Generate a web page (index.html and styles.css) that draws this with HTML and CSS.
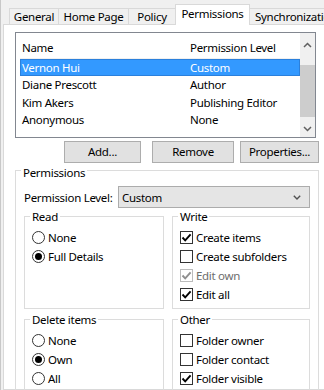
FILE: index.html
```html
<!DOCTYPE html>
<html>
<head>
<meta charset="utf-8">
<link rel="stylesheet" href="styles.css">
</head>
<body>
<div class="window">
  <div class="tabs">
    <div class="tab tab-general">General</div>
    <div class="tab tab-home">Home Page</div>
    <div class="tab tab-policy">Policy</div>
    <div class="tab tab-active">Permissions</div>
    <div class="tab tab-sync">Synchronization</div>
  </div>
  <div class="panel">
    <div class="listbox">
      <div class="list-main">
        <div class="list-head"><span class="col-name">Name</span><span>Permission Level</span></div>
        <div class="row row-selected"><span class="col-name">Vernon Hui</span><span>Custom</span></div>
        <div class="row"><span class="col-name">Diane Prescott</span><span>Author</span></div>
        <div class="row"><span class="col-name">Kim Akers</span><span>Publishing Editor</span></div>
        <div class="row"><span class="col-name">Anonymous</span><span>None</span></div>
      </div>
      <div class="scrollbar">
        <div class="sb-up"><svg width="9" height="6" viewBox="0 0 9 6"><path d="M1 5 L4.5 1.5 L8 5" fill="none" stroke="#606060" stroke-width="1.5"/></svg></div>
        <div class="sb-thumb"></div>
        <div class="sb-down"><svg width="9" height="6" viewBox="0 0 9 6"><path d="M1 1 L4.5 4.5 L8 1" fill="none" stroke="#606060" stroke-width="1.5"/></svg></div>
      </div>
    </div>
    <div class="buttons">
      <button class="btn btn-add">Add...</button>
      <button class="btn btn-remove">Remove</button>
      <button class="btn btn-props">Properties...</button>
    </div>
    <div class="group group-perm">
      <div class="legend">Permissions</div>
      <div class="level-row">
        <span class="level-label">Permission Level:</span>
        <div class="select"><span>Custom</span><svg width="8" height="5" viewBox="0 0 8 5"><path d="M0.8 0.8 L4 4 L7.2 0.8" fill="none" stroke="#505050" stroke-width="1.4"/></svg></div>
      </div>
      <div class="grid">
        <div class="group sub">
          <div class="legend">Read</div>
          <div class="opts">
            <div class="opt"><span class="radio"></span>None</div>
            <div class="opt"><span class="radio on"></span>Full Details</div>
          </div>
        </div>
        <div class="group sub">
          <div class="legend">Write</div>
          <div class="opts">
            <div class="opt"><span class="check"><svg width="11" height="11" viewBox="0 0 11 11"><path d="M1.5 5.5 L4.2 8.3 L9.6 2.4" fill="none" stroke="#000" stroke-width="1.9"/></svg></span>Create items</div>
            <div class="opt"><span class="check"></span>Create subfolders</div>
            <div class="opt opt-disabled"><span class="check"><svg width="11" height="11" viewBox="0 0 11 11"><path d="M1.5 5.5 L4.2 8.3 L9.6 2.4" fill="none" stroke="#8f8f8f" stroke-width="1.9"/></svg></span>Edit own</div>
            <div class="opt"><span class="check"><svg width="11" height="11" viewBox="0 0 11 11"><path d="M1.5 5.5 L4.2 8.3 L9.6 2.4" fill="none" stroke="#000" stroke-width="1.9"/></svg></span>Edit all</div>
          </div>
        </div>
        <div class="group sub">
          <div class="legend">Delete items</div>
          <div class="opts">
            <div class="opt"><span class="radio"></span>None</div>
            <div class="opt"><span class="radio on"></span>Own</div>
            <div class="opt"><span class="radio"></span>All</div>
          </div>
        </div>
        <div class="group sub">
          <div class="legend">Other</div>
          <div class="opts">
            <div class="opt"><span class="check"></span>Folder owner</div>
            <div class="opt"><span class="check"></span>Folder contact</div>
            <div class="opt"><span class="check"><svg width="11" height="11" viewBox="0 0 11 11"><path d="M1.5 5.5 L4.2 8.3 L9.6 2.4" fill="none" stroke="#000" stroke-width="1.9"/></svg></span>Folder visible</div>
          </div>
        </div>
      </div>
    </div>
  </div>
</div>
</body>
</html>
```
FILE: styles.css
```css
* { box-sizing: border-box; }
html, body { margin: 0; padding: 0; }
body {
  width: 324px;
  height: 390px;
  overflow: hidden;
  background: #f0f0f0;
  font-family: "Noto Sans", "Open Sans", sans-serif;
  font-size: 11.5px;
  letter-spacing: -0.3px;
  color: #000;
}
.window {
  height: 390px;
  border-left: 1px solid #c8c8c8;
  padding-left: 2px;
}
.tabs {
  display: flex;
  align-items: flex-end;
  height: 24px;
  padding-left: 7px;
}
.tab {
  height: 16px;
  margin-left: -1px;
  border: 1px solid #d9d9d9;
  border-bottom: 0;
  background: #f0f0f0;
  line-height: 15px;
  text-align: center;
  white-space: nowrap;
  overflow: hidden;
  flex-shrink: 0;
}
.tab-general { width: 50px; }
.tab-home { width: 71px; }
.tab-policy { width: 48px; }
.tab-active {
  width: 75px;
  height: 21px;
  margin-bottom: -1px;
  background: #fff;
  position: relative;
  z-index: 1;
  line-height: 18px;
}
.tab-sync { width: 90px; text-align: left; padding-left: 5px; }
.panel {
  width: 340px;
  height: 366px;
  background: #fff;
  border: 1px solid #d9d9d9;
  padding: 7px 0 0 11px;
}
.listbox {
  width: 301px;
  height: 106px;
  border: 1px solid #828790;
  display: flex;
  background: #fff;
}
.list-main { flex: 1; padding-left: 4px; }
.list-head {
  display: flex;
  height: 26px;
  padding: 7px 0 0 2px;
  line-height: 16px;
  border-bottom: 1px solid #f0f0f0;
}
.col-name { width: 168px; flex-shrink: 0; }
.row {
  display: flex;
  height: 17.5px;
  line-height: 15.5px;
  padding-left: 1px;
  border: 1px solid transparent;
  white-space: nowrap;
}
.row-selected {
  height: 17px;
  line-height: 15px;
  background: #3399ff;
  border-color: #2b80dc;
  color: #fff;
}
.scrollbar {
  width: 15px;
  display: flex;
  flex-direction: column;
  background: #f0f0f0;
}
.sb-up, .sb-down {
  display: flex;
  align-items: center;
  justify-content: center;
}
.sb-up { height: 24px; }
.sb-thumb { height: 52px; margin-top: 8px; background: #cdcdcd; }
.sb-down { height: 17px; margin-top: auto; }
.buttons {
  display: flex;
  height: 22px;
  margin-top: 3px;
  padding-left: 49px;
}
.btn {
  font: inherit;
  letter-spacing: inherit;
  color: #000;
  background: #e1e1e1;
  border: 1px solid #adadad;
  padding: 0;
  height: 22px;
  line-height: 18px;
}
.btn-add { width: 77px; }
.btn-remove { width: 82px; margin-left: 11px; }
.btn-props { width: 79px; margin-left: 6px; }
.group {
  border: 1px solid #dcdcdc;
}
.group-perm {
  width: 304px;
  height: 260px;
  margin-top: 7px;
  padding: 0 8px;
}
.legend {
  display: table;
  margin: -8px 0 0 -2px;
  padding: 0 2px;
  background: #fff;
  line-height: 16px;
}
.group-perm > .legend { margin-top: -6px; margin-left: -3px; }
.level-row {
  display: flex;
  align-items: center;
  height: 22px;
  margin-top: 5px;
}
.level-label { width: 94px; flex-shrink: 0; white-space: nowrap; }
.select {
  width: 192px;
  height: 22px;
  border: 1px solid #acacac;
  background: #e5e5e5;
  display: flex;
  align-items: center;
  justify-content: space-between;
  padding: 0 8px 0 3px;
}
.grid {
  display: grid;
  grid-template-columns: 140px 138px;
  column-gap: 8px;
  row-gap: 10px;
  margin-top: 8px;
}
.sub { height: 93px; padding: 0 7px; }
.opts { padding-top: 3px; }
.opt {
  display: flex;
  align-items: center;
  height: 19px;
  white-space: nowrap;
}
.opt-disabled { color: #6d6d6d; }
.radio {
  width: 13px;
  height: 13px;
  border: 1px solid #333;
  border-radius: 50%;
  background: #fff;
  margin-right: 3px;
  display: flex;
  align-items: center;
  justify-content: center;
  flex-shrink: 0;
}
.radio.on::after {
  content: "";
  width: 7px;
  height: 7px;
  border-radius: 50%;
  background: #000;
}
.check {
  width: 13px;
  height: 13px;
  border: 1px solid #333;
  background: #fff;
  margin-right: 3px;
  display: flex;
  flex-shrink: 0;
}
.opt-disabled .check { border-color: #bcbcbc; }
```
